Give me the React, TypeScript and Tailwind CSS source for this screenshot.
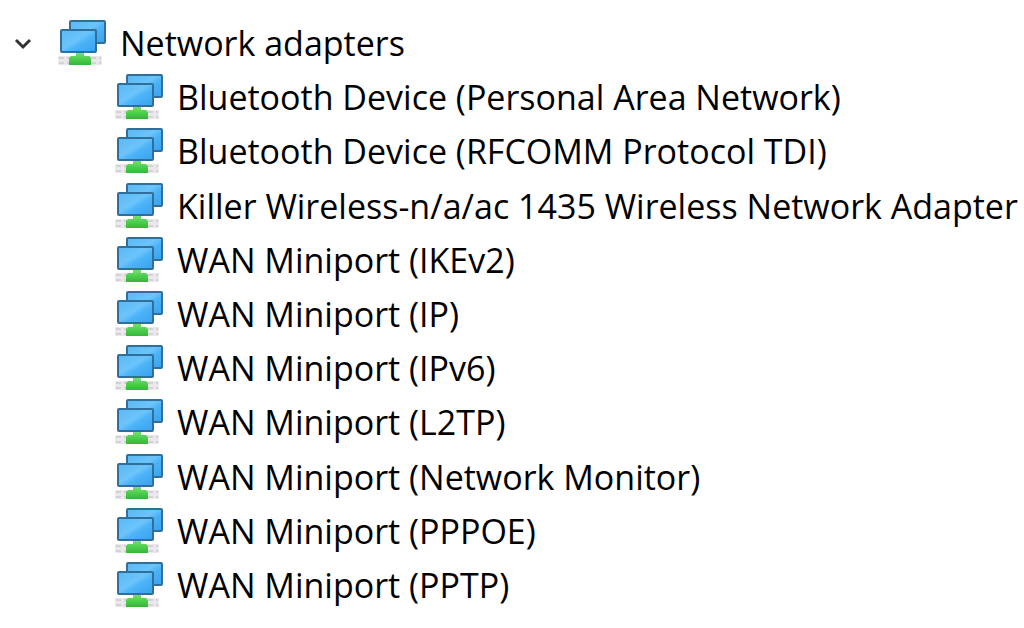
import { useState } from "react";

const adapters = [
  "Bluetooth Device (Personal Area Network)",
  "Bluetooth Device (RFCOMM Protocol TDI)",
  "Killer Wireless-n/a/ac 1435 Wireless Network Adapter",
  "WAN Miniport (IKEv2)",
  "WAN Miniport (IP)",
  "WAN Miniport (IPv6)",
  "WAN Miniport (L2TP)",
  "WAN Miniport (Network Monitor)",
  "WAN Miniport (PPPOE)",
  "WAN Miniport (PPTP)",
];

function NetworkIcon() {
  return (
    <svg width="48" height="46" viewBox="0 0 48 46" className="shrink-0" aria-hidden="true">
      <defs>
        <linearGradient id="screen" x1="0" y1="0" x2="1" y2="1">
          <stop offset="0" stopColor="#5ab8f4" />
          <stop offset="0.45" stopColor="#6cc4fa" />
          <stop offset="0.6" stopColor="#4cb3f8" />
          <stop offset="1" stopColor="#38a2ee" />
        </linearGradient>
        <linearGradient id="base" x1="0" y1="0" x2="0" y2="1">
          <stop offset="0" stopColor="#7fe07c" />
          <stop offset="0.5" stopColor="#4fd04f" />
          <stop offset="1" stopColor="#37b53a" />
        </linearGradient>
      </defs>
      {/* cable */}
      <rect x="0" y="36" width="44" height="9" rx="1" fill="#ebe8eb" />
      <path d="M1 38h42M1 43h42" stroke="#d6d1d6" strokeWidth="2" strokeDasharray="5 3" />
      {/* back monitor */}
      <rect x="12" y="1" width="35" height="22" rx="1" fill="url(#screen)" stroke="#2f6f99" strokeWidth="2" />
      {/* stand */}
      <path d="M18 32h8v4h5l2 2v7H11v-7l2-2h5z" fill="url(#base)" />
      {/* front monitor */}
      <rect x="3" y="10" width="35" height="22" rx="1" fill="url(#screen)" stroke="#2f6f99" strokeWidth="2" />
    </svg>
  );
}

export default function App() {
  const [open, setOpen] = useState(true);

  return (
    <main className="min-h-screen bg-white px-3 py-4 font-['Open_Sans','Noto_Sans',sans-serif] text-[34px] leading-none whitespace-nowrap text-black">
      <ul className="grid min-h-[calc(100vh-32px)] auto-rows-fr">
        <li className="flex items-center">
          <button
            type="button"
            aria-expanded={open}
            onClick={() => setOpen(!open)}
            className="flex items-center"
          >
            <svg
              width="22"
              height="22"
              viewBox="0 0 22 22"
              fill="none"
              className={open ? "mr-6" : "mr-6 -rotate-90"}
              aria-hidden="true"
            >
              <path d="M4 8l7 7 7-7" stroke="#333333" strokeWidth="3" />
            </svg>
            <NetworkIcon />
            <span className="ml-[14px]">Network adapters</span>
          </button>
        </li>
        {open &&
          adapters.map((name) => (
            <li key={name} className="flex items-center gap-[14px] pl-[103px]">
              <NetworkIcon />
              <span>{name}</span>
            </li>
          ))}
      </ul>
    </main>
  );
}
